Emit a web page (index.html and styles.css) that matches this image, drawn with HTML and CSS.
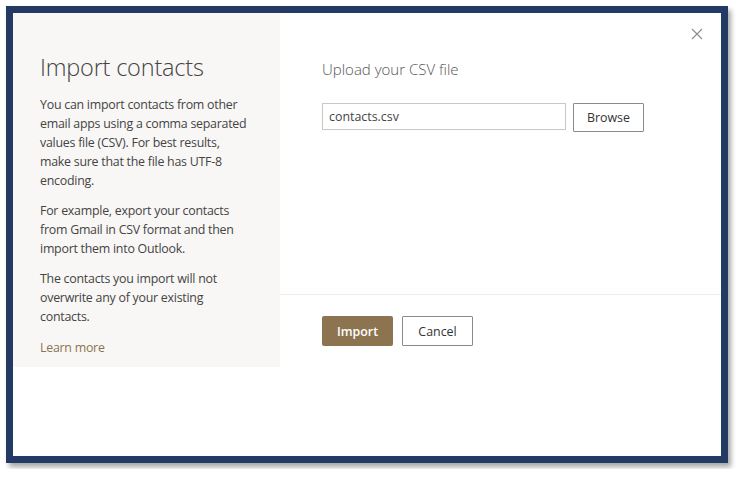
FILE: index.html
```html
<!DOCTYPE html>
<html lang="en">
<head>
    <meta charset="UTF-8">
    <title>Import contacts</title>
    <link rel="stylesheet" href="styles.css">
</head>
<body>

<div class="dialog">
    <div class="info-panel">
        <h1>Import contacts</h1>
        <p>You can import contacts from other email apps using a comma separated values file (CSV). For best results, make sure that the file has UTF-8 encoding.</p>
        <p>For example, export your contacts from Gmail in CSV format and then import them into Outlook.</p>
        <p>The contacts you import will not overwrite any of your existing contacts.</p>
        <a class="learn-more" href="#">Learn more</a>
    </div>

    <div class="main-panel">
        <button class="close-btn" aria-label="Close">
            <svg width="12" height="12" viewBox="0 0 12 12">
                <path d="M1 1 L11 11 M11 1 L1 11" stroke="#8a8a8a" stroke-width="1.1" fill="none"/>
            </svg>
        </button>
        <div class="upload-section">
            <h2>Upload your CSV file</h2>
            <div class="file-row">
                <input class="file-input" type="text" value="contacts.csv">
                <button class="browse-btn">Browse</button>
            </div>
        </div>
        <div class="actions">
            <button class="import-btn">Import</button>
            <button class="cancel-btn">Cancel</button>
        </div>
    </div>
</div>

</body>
</html>
```

FILE: styles.css
```css
* {
    margin: 0;
    padding: 0;
    box-sizing: border-box;
}

body {
    font-family: 'Open Sans', 'Noto Sans', sans-serif;
    background-color: white;
    color: #333;
    padding: 6px;
}

.dialog {
    width: 722px;
    height: 457px;
    border: 7px solid #223a64;
    background-color: white;
    display: flex;
    align-items: flex-start;
    box-shadow: 3px 4px 5px rgba(0, 0, 0, 0.35);
}

.info-panel {
    width: 267px;
    background-color: #f8f7f5;
    padding: 38px 30px 10px 27px;
}

.info-panel h1 {
    font-size: 23.5px;
    font-weight: 300;
    color: #444;
    letter-spacing: -0.2px;
    margin-bottom: 12px;
}

.info-panel p {
    font-size: 12.4px;
    line-height: 19px;
    letter-spacing: -0.25px;
    color: #444;
    margin-bottom: 11px;
}

.learn-more {
    display: block;
    font-size: 12.4px;
    line-height: 19px;
    letter-spacing: -0.25px;
    color: #8d7451;
    text-decoration: none;
    margin-top: 12px;
}

.main-panel {
    flex: 1;
    height: 100%;
    position: relative;
    display: flex;
    flex-direction: column;
}

.close-btn {
    position: absolute;
    top: 15px;
    right: 18px;
    background: none;
    border: none;
    cursor: pointer;
}

.upload-section {
    height: 282px;
    padding: 46px 42px 0 42px;
    border-bottom: 1px solid #ececec;
}

.upload-section h2 {
    font-size: 15px;
    font-weight: 300;
    color: #555;
    margin-bottom: 24px;
}

.file-row {
    display: flex;
    gap: 7px;
    align-items: flex-start;
}

.file-input {
    width: 244px;
    height: 27px;
    border: 1px solid #c8c8c8;
    padding: 0 6px;
    font-family: inherit;
    font-size: 12.4px;
    color: #444;
    outline: none;
}

.browse-btn, .cancel-btn {
    height: 29px;
    width: 71px;
    background-color: white;
    border: 1px solid #8a8a8a;
    border-radius: 1px;
    font-family: inherit;
    font-size: 12.4px;
    color: #333;
    cursor: pointer;
}

.actions {
    display: flex;
    gap: 9px;
    padding: 21px 42px;
}

.import-btn {
    height: 30px;
    width: 71px;
    background-color: #8d7451;
    border: none;
    border-radius: 2px;
    color: white;
    font-family: inherit;
    font-size: 12.4px;
    font-weight: 600;
    cursor: pointer;
}

.cancel-btn {
    height: 30px;
}
```
